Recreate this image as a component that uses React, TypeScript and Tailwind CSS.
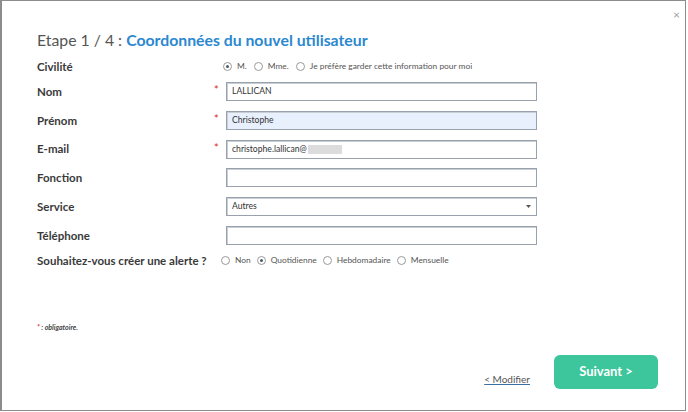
import React from "react";

const font = { fontFamily: "Lato, 'Open Sans', sans-serif" };

function Radio({ checked, label }: { checked?: boolean; label: string }) {
  return (
    <div className="flex items-center gap-[5px]">
      <span className="flex h-[9px] w-[9px] items-center justify-center rounded-full border border-[#9a9a9a] bg-white">
        {checked && <span className="h-[3px] w-[3px] rounded-full bg-[#4a5a6a]" />}
      </span>
      <span className="text-[8.4px] text-[#555]">{label}</span>
    </div>
  );
}

function Row({
  label,
  required,
  children,
}: {
  label: string;
  required?: boolean;
  children: React.ReactNode;
}) {
  return (
    <div className="flex h-[19px] items-center">
      <div className="w-[177px] text-[11.5px] font-bold text-[#3a3a3a]">{label}</div>
      <div className="flex w-[12px] items-start self-start pt-[3px] text-[11px] leading-[10px] text-[#e0262b]">
        {required ? "*" : ""}
      </div>
      {children}
    </div>
  );
}

function Input({ value, autofill, children }: { value?: string; autofill?: boolean; children?: React.ReactNode }) {
  return (
    <div
      className={`flex h-[19px] w-[311px] items-center border border-[#98a1ac] pl-[5px] pr-[4px] text-[8.6px] text-[#333] shadow-[inset_1px_1px_0_#c9ced4] ${
        autofill ? "bg-[#e8f0fe]" : "bg-white"
      }`}
    >
      {value}
      {children}
    </div>
  );
}

export default function App() {
  return (
    <div className="h-[412px] w-[688px] bg-white" style={font}>
      <div className="relative flex h-[411px] w-[686px] flex-col border border-l-2 border-[#8c8c8c] pl-[35px] pr-[27px]">
        <div className="absolute right-[5px] top-[8px] text-[12px] leading-[12px] text-[#a0a0a0]">×</div>

        <div className="mt-[27px] h-[24px] text-[15.8px] leading-[24px]">
          <span className="text-[#555]">Etape 1 / 4 : </span>
          <span className="font-bold text-[#2b88cf]">Coordonnées du nouvel utilisateur</span>
        </div>

        <div className="mt-[5px] flex flex-col">
          <div className="flex h-[19px] items-center">
            <div className="w-[186px] text-[11.5px] font-bold text-[#3a3a3a]">Civilité</div>
            <div className="flex items-center gap-[7px]">
              <Radio checked label="M." />
              <Radio label="Mme." />
              <Radio label="Je préfère garder cette information pour moi" />
            </div>
          </div>

          <div className="mt-[6px] flex flex-col gap-[9.8px]">
            <Row label="Nom" required>
              <Input value="LALLICAN" />
            </Row>
            <Row label="Prénom" required>
              <Input value="Christophe" autofill />
            </Row>
            <Row label="E-mail" required>
              <Input value="christophe.lallican@">
                <span className="ml-[1px] h-[9px] w-[34px] bg-[#dcdcdc]" />
              </Input>
            </Row>
            <Row label="Fonction">
              <Input />
            </Row>
            <Row label="Service">
              <Input>
                <span className="flex-1">Autres</span>
                <svg width="5" height="3" viewBox="0 0 5 3" className="mr-[1px]">
                  <path d="M0 0 L5 0 L2.5 3 Z" fill="#555" />
                </svg>
              </Input>
            </Row>
            <Row label="Téléphone">
              <Input />
            </Row>
          </div>

          <div className="mt-[6px] flex h-[19px] items-center">
            <div className="w-[184px] text-[11.5px] font-bold text-[#3a3a3a]">Souhaitez-vous créer une alerte ?</div>
            <div className="flex items-center gap-[6px]">
              <Radio label="Non" />
              <Radio checked label="Quotidienne" />
              <Radio label="Hebdomadaire" />
              <Radio label="Mensuelle" />
            </div>
          </div>
        </div>

        <div className="mt-[52px] flex items-start text-[7px] font-bold italic leading-[10px] text-[#444]">
          <span className="text-[#e0262b]">*</span>
          <span>&nbsp;: obligatoire.</span>
        </div>

        <div className="mt-[23px] flex items-center justify-end">
          <span className="mt-[16px] text-[10px] text-[#555] underline decoration-[#3a6ea5]">&lt; Modifier</span>
          <button className="ml-[24px] flex h-[34px] w-[104px] items-center justify-center rounded-[6px] bg-[#3dc69b] text-[13px] font-bold text-white">
            Suivant &gt;
          </button>
        </div>
      </div>
    </div>
  );
}
